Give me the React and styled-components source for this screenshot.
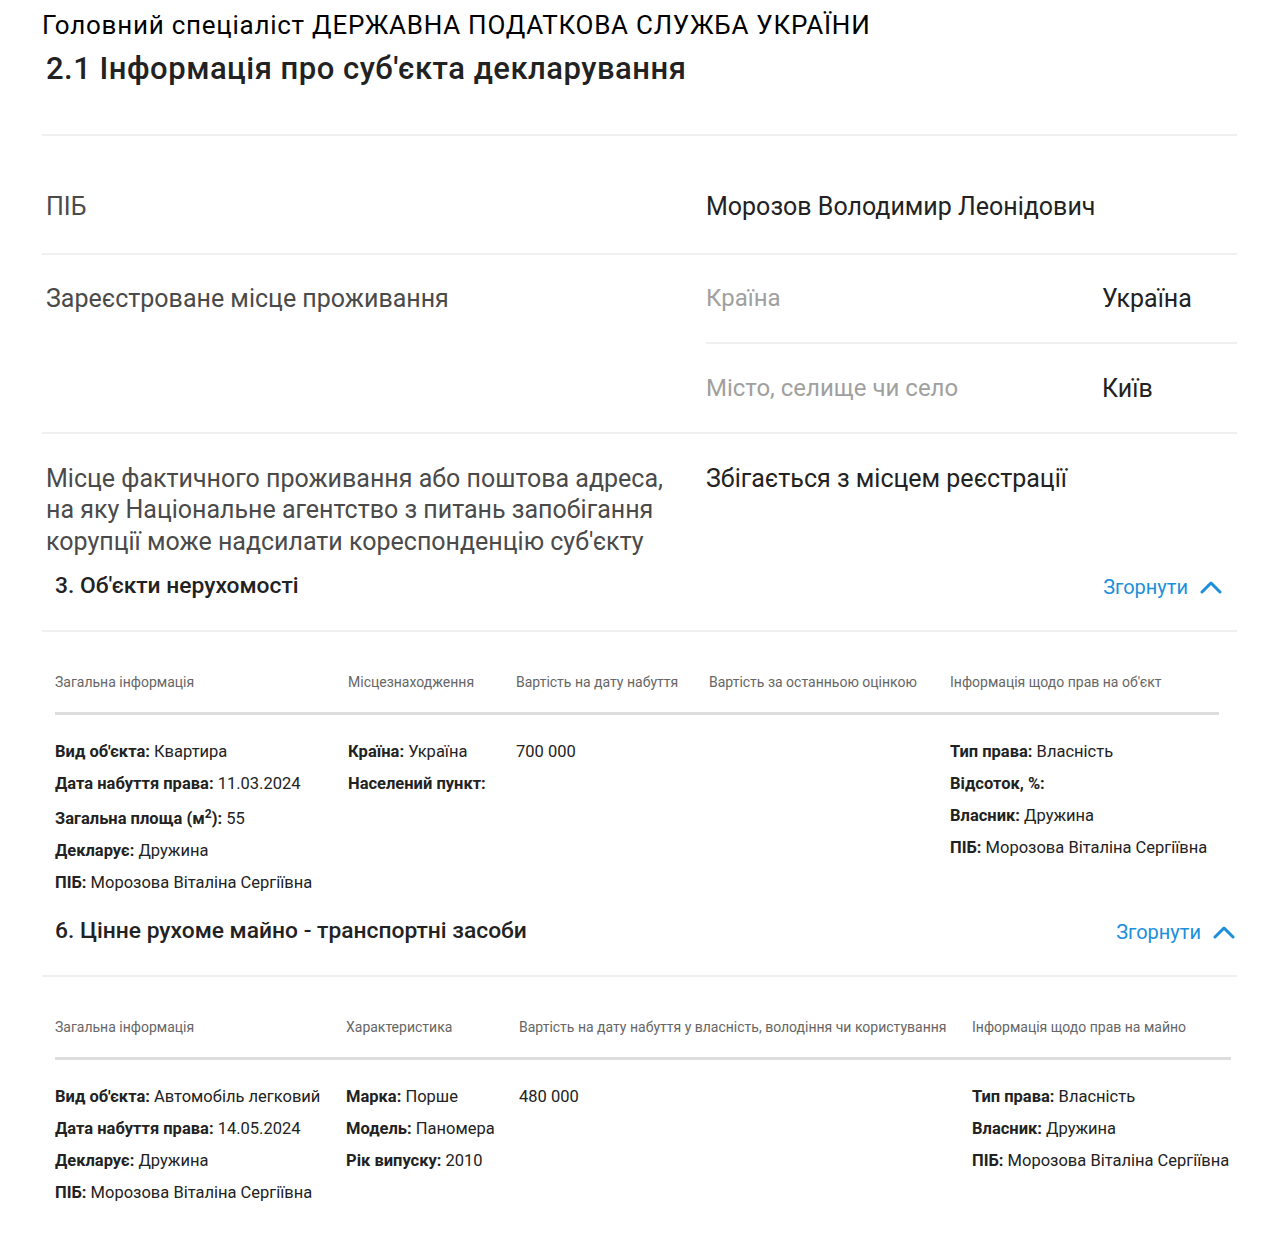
import styled, { createGlobalStyle } from 'styled-components';

const GlobalStyle = createGlobalStyle`
  * {
    box-sizing: border-box;
  }
  body {
    margin: 0;
    background: #fff;
    font-family: Roboto, "Noto Sans", Arial, sans-serif;
    color: #222;
  }
`;

const subject = {
  position: 'Головний спеціаліст ДЕРЖАВНА ПОДАТКОВА СЛУЖБА УКРАЇНИ',
  name: 'Морозов Володимир Леонідович',
  country: 'Україна',
  city: 'Київ',
  actual: 'Збігається з місцем реєстрації',
};

const realty = {
  title: "3. Об'єкти нерухомості",
  columns: '293px 168px 193px 241px 269px',
  width: 1164,
  toggleInset: 15,
  heads: [
    'Загальна інформація',
    'Місцезнаходження',
    'Вартість на дату набуття',
    'Вартість за останньою оцінкою',
    "Інформація щодо прав на об'єкт",
  ],
  cells: [
    [
      ["Вид об'єкта", 'Квартира'],
      ['Дата набуття права', '11.03.2024'],
      ['Загальна площа (м2)', '55'],
      ['Декларує', 'Дружина'],
      ['ПІБ', 'Морозова Віталіна Сергіївна'],
    ],
    [
      ['Країна', 'Україна'],
      ['Населений пункт', ''],
    ],
    [[null, '700 000']],
    [],
    [
      ['Тип права', 'Власність'],
      ['Відсоток, %', ''],
      ['Власник', 'Дружина'],
      ['ПІБ', 'Морозова Віталіна Сергіївна'],
    ],
  ],
};

const vehicles = {
  title: '6. Цінне рухоме майно - транспортні засоби',
  columns: '291px 173px 453px 259px',
  width: 1176,
  toggleInset: 2,
  heads: [
    'Загальна інформація',
    'Характеристика',
    'Вартість на дату набуття у власність, володіння чи користування',
    'Інформація щодо прав на майно',
  ],
  cells: [
    [
      ["Вид об'єкта", 'Автомобіль легковий'],
      ['Дата набуття права', '14.05.2024'],
      ['Декларує', 'Дружина'],
      ['ПІБ', 'Морозова Віталіна Сергіївна'],
    ],
    [
      ['Марка', 'Порше'],
      ['Модель', 'Паномера'],
      ['Рік випуску', '2010'],
    ],
    [[null, '480 000']],
    [
      ['Тип права', 'Власність'],
      ['Власник', 'Дружина'],
      ['ПІБ', 'Морозова Віталіна Сергіївна'],
    ],
  ],
};

function Key({ text }) {
  // "(м2)" gets the 2 raised as a superscript
  if (text.includes('(м2)')) {
    const [before, after] = text.split('(м2)');
    return (
      <b>
        {before}(м<sup>2</sup>){after}:
      </b>
    );
  }
  return <b>{text}:</b>;
}

function ChevronUp() {
  return (
    <svg width="22" height="14" viewBox="0 0 22 14" fill="none">
      <polyline
        points="2,12 11,3 20,12"
        stroke="currentColor"
        strokeWidth="3"
        strokeLinecap="round"
        strokeLinejoin="round"
      />
    </svg>
  );
}

function Section({ data }) {
  return (
    <SectionBox>
      <SectionHead>
        <SectionTitle>{data.title}</SectionTitle>
        <Toggle $inset={data.toggleInset}>
          Згорнути
          <ChevronUp />
        </Toggle>
      </SectionHead>
      <Table $columns={data.columns} $width={data.width}>
        {data.heads.map((h) => (
          <HeadCell key={h}>{h}</HeadCell>
        ))}
        {data.cells.map((lines, i) => (
          <BodyCell key={i}>
            {lines.map(([k, v], j) => (
              <Line key={j}>
                {k && <Key text={k} />}
                {k && v ? ' ' : ''}
                {v}
              </Line>
            ))}
          </BodyCell>
        ))}
      </Table>
    </SectionBox>
  );
}

export default function App() {
  return (
    <>
      <GlobalStyle />
      <Page>
        <Position>{subject.position}</Position>
        <Heading>2.1 Інформація про суб'єкта декларування</Heading>
        <InfoList>
          <InfoRow $first>
            <InfoLabel>ПІБ</InfoLabel>
            <InfoValue>{subject.name}</InfoValue>
          </InfoRow>
          <InfoRow $flush>
            <InfoLabel $pad>Зареєстроване місце проживання</InfoLabel>
            <SubList>
              <SubRow>
                <SubLabel>Країна</SubLabel>
                <InfoValue>{subject.country}</InfoValue>
              </SubRow>
              <SubRow>
                <SubLabel>Місто, селище чи село</SubLabel>
                <InfoValue>{subject.city}</InfoValue>
              </SubRow>
            </SubList>
          </InfoRow>
          <InfoRow $last>
            <InfoLabel>
              Місце фактичного проживання або поштова адреса, на яку Національне
              агентство з питань запобігання корупції може надсилати
              кореспонденцію суб'єкту
            </InfoLabel>
            <InfoValue>{subject.actual}</InfoValue>
          </InfoRow>
        </InfoList>
        <Section data={realty} />
        <Section data={vehicles} />
      </Page>
    </>
  );
}

const Page = styled.div`
  width: 1237px;
  padding: 10px 0 30px 42px;
`;

const Position = styled.div`
  font-size: 26px;
  line-height: 30px;
  letter-spacing: 0.75px;
  color: #000;
`;

const Heading = styled.h2`
  margin: 0;
  padding: 10px 0 46px 4px;
  font-size: 31px;
  line-height: 38px;
  font-weight: 500;
  letter-spacing: 0.5px;
  color: #222;
  border-bottom: 2px solid #f0f0f0;
`;

const InfoList = styled.div`
  display: flex;
  flex-direction: column;
`;

const InfoRow = styled.div`
  display: grid;
  grid-template-columns: 664px 1fr;
  padding: ${(p) => (p.$flush ? '0' : p.$first ? '55px 0 30px' : '29px 0 0')};
  border-bottom: ${(p) => (p.$last ? 'none' : '2px solid #f0f0f0')};
`;

const InfoLabel = styled.div`
  padding: ${(p) => (p.$pad ? '28px 0 0 4px' : '0 0 0 4px')};
  max-width: 640px;
  font-size: 25px;
  line-height: 31.5px;
  color: #4a4a4a;
`;

const InfoValue = styled.div`
  font-size: 25px;
  line-height: 31.5px;
  color: #222;
`;

const SubList = styled.div`
  display: flex;
  flex-direction: column;
`;

const SubRow = styled.div`
  display: grid;
  grid-template-columns: 396px 1fr;
  padding: 28px 0 27.5px;
  & + & {
    border-top: 2px solid #f0f0f0;
    padding-top: 29px;
  }
`;

const SubLabel = styled.div`
  font-size: 24px;
  line-height: 31.5px;
  color: #a0a0a0;
`;

const SectionBox = styled.section`
  margin-top: 14px;
  & + & {
    margin-top: 23px;
  }
`;

const SectionHead = styled.div`
  display: flex;
  justify-content: space-between;
  align-items: center;
  padding: 0 0 29px 13px;
  border-bottom: 2px solid #f0f0f0;
`;

const SectionTitle = styled.h3`
  margin: 0;
  font-size: 22.8px;
  line-height: 30px;
  font-weight: 500;
  color: #222;
`;

const Toggle = styled.button`
  display: flex;
  align-items: center;
  gap: 12px;
  margin-top: 2px;
  padding: 0 ${(p) => p.$inset}px 0 0;
  border: none;
  background: none;
  font-family: inherit;
  font-size: 20px;
  line-height: 26px;
  color: #1b8fdb;
  cursor: pointer;
`;

const Table = styled.div`
  display: grid;
  grid-template-columns: ${(p) => p.$columns};
  width: ${(p) => p.$width}px;
  margin-left: 13px;
  padding-top: 41px;
`;

const HeadCell = styled.div`
  padding-bottom: 21px;
  font-size: 14px;
  line-height: 18px;
  color: #666;
  border-bottom: 3px solid #ddd;
`;

const BodyCell = styled.div`
  display: flex;
  flex-direction: column;
  gap: 12px;
  padding-top: 27px;
`;

const Line = styled.div`
  font-size: 16.5px;
  line-height: 20px;
  color: #222;
  b {
    font-weight: 700;
  }
  sup {
    font-size: 12px;
    line-height: 14px;
  }
`;
